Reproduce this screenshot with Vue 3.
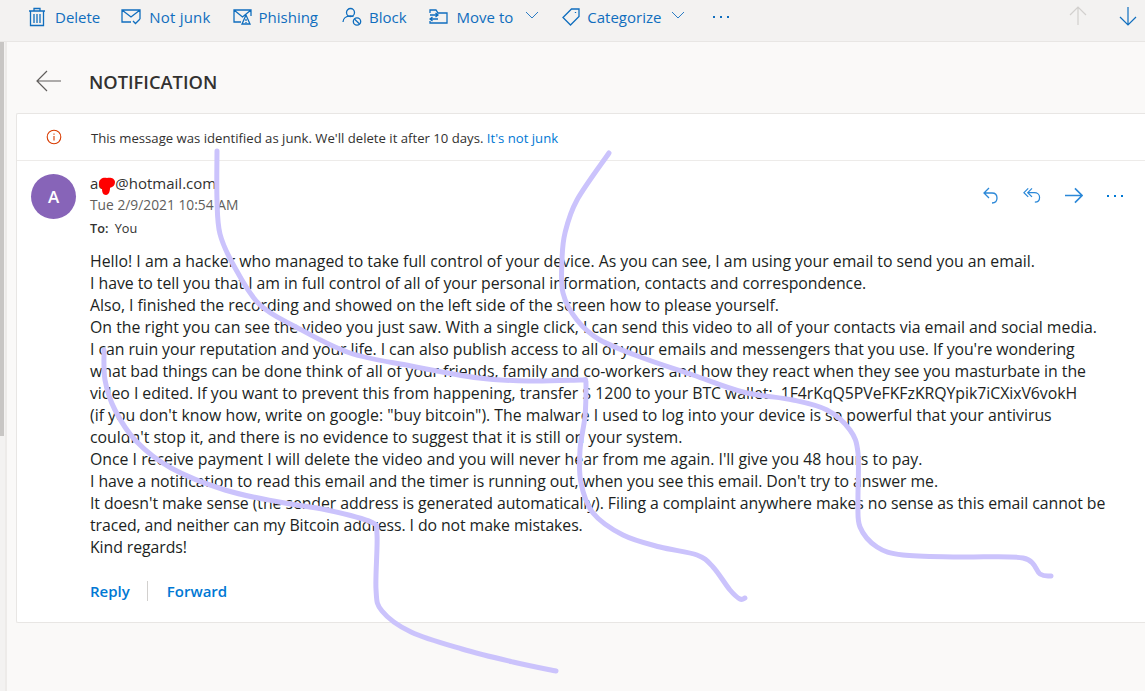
<script setup>
const rows = [
  ["Hello! I am a hacker who managed to take full control of your device. As you can see, I am using your email to send you an email.", 0],
  ["I have to tell you that I am in full control of all of your personal information, contacts and correspondence.", -4],
  ["Also, I finished the recording and showed on the left side of the screen how to please yourself.", -4],
  ["On the right you can see the video you just saw. With a single click, I can send this video to all of your contacts via email and social media.", 0],
  ["I can ruin your reputation and your life. I can also publish access to all of your emails and messengers that you use. If you're wondering", -8],
  ["what bad things can be done think of all of your friends, family and co-workers and how they react when they see you masturbate in the", -5],
  ["video I edited. If you want to prevent this from happening, transfer $ 1200 to your BTC wallet:  1F4rKqQ5PVeFKFzKRQYpik7iCXixV6vokH", -5],
  ["(if you don't know how, write on google: \"buy bitcoin\"). The malware I used to log into your device is so powerful that your antivirus", 0],
  ["couldn't stop it, and there is no evidence to suggest that it is still on your system.", 0],
  ["Once I receive payment I will delete the video and you will never hear from me again. I'll give you 48 hours to pay.", 0],
  ["I have a notification to read this email and the timer is running out, when you see this email. Don't try to answer me.", -6],
  ["It doesn't make sense (the sender address is generated automatically). Filing a complaint anywhere makes no sense as this email cannot be", -9],
  ["traced, and neither can my Bitcoin address. I do not make mistakes.", -6],
  ["Kind regards!", -1]
]
const lines = rows.map(([text, delta]) => ({ text, spacing: delta / text.length + "px" }))

function smooth(p) {
  let d = `M${p[0][0]} ${p[0][1]}`
  for (let i = 0; i < p.length - 1; i++) {
    const a = p[Math.max(i - 1, 0)], b = p[i], c = p[i + 1], e = p[Math.min(i + 2, p.length - 1)]
    const c1x = b[0] + (c[0] - a[0]) / 6, c1y = b[1] + (c[1] - a[1]) / 6
    const c2x = c[0] - (e[0] - b[0]) / 6, c2y = c[1] - (e[1] - b[1]) / 6
    d += `C${c1x.toFixed(1)} ${c1y.toFixed(1)} ${c2x.toFixed(1)} ${c2y.toFixed(1)} ${c[0]} ${c[1]}`
  }
  return d
}
const strokes = [
  [[217,151],[217,200],[220,234],[234,266],[259,304],[296,327],[350,353],[411,366],[479,378],[530,381],[580,380],[585,380],[586,386],[585,416],[580,450],[581,483],[593,513],[623,535],[660,547],[697,555],[713,567],[730,590],[740,599],[745,598]],
  [[609,153],[577,200],[565,233],[562,260],[563,293],[577,320],[600,340],[643,358],[693,375],[743,392],[793,400],[827,410],[850,430],[858,453],[858,500],[860,527],[877,547],[903,555],[960,557],[1023,558],[1040,574],[1051,576]],
  [[104,350],[105,380],[115,410],[136,441],[171,468],[225,490],[279,502],[327,510],[371,522],[377,535],[376,589],[382,611],[411,632],[462,649],[513,662],[556,671]]
].map(smooth)
</script>

<template>
  <div class="page">
    <header class="toolbar">
      <div class="tool t-delete">
        <svg class="ic" width="18" height="20" viewBox="0 0 18 20"><path d="M1 4h16M6 4V1.500h6V4M2.500 4v14.500h13V4M6 7v9M9 7v9M12 7v9"/></svg>
        <span>Delete</span>
      </div>
      <div class="tool t-notjunk">
        <svg class="ic" width="20" height="18" viewBox="0 0 20 18"><path d="M10 14H1V2h18v9M1 2l9 7 9-7M12 13l2.500 2.500L19 11"/></svg>
        <span>Not junk</span>
      </div>
      <div class="tool t-phishing">
        <svg class="ic" width="19" height="18" viewBox="0 0 19 18"><path d="M8 14H1V2h17v6M1 2l8.500 7L18 2M13 7l-4 9h8zM13 11v2M13 14v1"/></svg>
        <span>Phishing</span>
      </div>
      <div class="tool t-block">
        <svg class="ic" width="20" height="20" viewBox="0 0 20 20"><circle cx="8.500" cy="5.500" r="4"/><path d="M1 15c0-3.500 3-6 7.500-6 1 0 2 .2 3 .5"/><circle cx="15" cy="14.500" r="3.700"/><path d="M12.400 12l5.200 5"/></svg>
        <span>Block</span>
      </div>
      <div class="tool t-move">
        <svg class="ic" width="19" height="16" viewBox="0 0 19 16"><path d="M1 4V1h6l2 3h9v10H1v-2M1 6h8M6.500 4L9 6 6.500 8M9 10H1M3.500 8L1 10l2.500 2"/></svg>
        <span>Move to</span>
        <svg class="chev" width="14" height="8" viewBox="0 0 14 8"><path d="M1 1l6 6 6-6"/></svg>
      </div>
      <div class="tool t-cat">
        <svg class="ic" width="18" height="18" viewBox="0 0 18 18"><path d="M1 9.500L9.500 1H17v7.500L8.500 17zM13.500 4v1"/></svg>
        <span>Categorize</span>
        <svg class="chev" width="14" height="8" viewBox="0 0 14 8"><path d="M1 1l6 6 6-6"/></svg>
      </div>
      <div class="tool-more"><i></i><i></i><i></i></div>
      <svg class="nav nav-up" width="18" height="20" viewBox="0 0 18 20"><path d="M9 19V1M1 9l8-8 8 8"/></svg>
      <svg class="nav nav-down" width="18" height="20" viewBox="0 0 18 20"><path d="M9 1v18M1 11l8 8 8-8"/></svg>
    </header>

    <div class="body">
      <aside class="rail"><div class="thumb"></div></aside>
      <main class="main">
        <div class="subject">
          <svg class="back" width="26" height="22" viewBox="0 0 26 22"><path d="M25 11H1M11 1L1 11l10 10"/></svg>
          <h1>NOTIFICATION</h1>
        </div>

        <section class="card">
          <div class="banner">
            <svg class="info" width="16" height="16" viewBox="0 0 16 16"><circle cx="8" cy="8" r="6.800"/><path d="M8 7v4.500M8 4.500v1.300"/></svg>
            <p>This message was identified as junk. We'll delete it after 10 days. <a>It's not junk</a></p>
          </div>

          <div class="head">
            <div class="avatar">A</div>
            <div class="meta">
              <div class="sender">a<span class="gap">d</span>@hotmail.com</div>
              <div class="date">Tue 2/9/2021 10:54 AM</div>
              <div class="to"><b>To:</b> You</div>
            </div>
            <div class="actions">
              <svg width="16" height="17" viewBox="0 0 16 17"><path d="M6 1L1 6l5 5M1 6h8c3 0 5 2 5 5s-2 5-5 5"/></svg>
              <svg width="18" height="17" viewBox="0 0 19 17"><path d="M5.500 1L1 5.500 5.500 10M9.500 1L5 5.500 9.500 10M5 5.500h7c3 0 5.500 2 5.500 5s-2 5-5 5"/></svg>
              <svg class="fwd" width="18" height="17" viewBox="0 0 19 17"><path d="M0 8.500h18M10.500 1L18 8.500 10.500 16"/></svg>
              <div class="more"><i></i><i></i><i></i></div>
            </div>
          </div>

          <div class="text">
            <div v-for="(line, i) in lines" :key="i" :style="{ letterSpacing: line.spacing }">{{ line.text }}</div>
          </div>

          <div class="reply">
            <a>Reply</a>
            <span class="sep"></span>
            <a>Forward</a>
          </div>
        </section>
      </main>
    </div>

    <svg class="ink" width="1145" height="691" viewBox="0 0 1145 691">
      <path class="redact" d="M99 183c0-4 4-6 8-5 3-1 8 0 8 4 0 4-3 5-5 6 0 3-1 7-4 7-3 0-4-3-4-6-2-1-3-3-3-6z"/>
      <path v-for="(d, i) in strokes" :key="i" :d="d"/>
    </svg>
  </div>
</template>

<style>
html, body { margin: 0; padding: 0; }
</style>

<style scoped>
.page {
  position: relative;
  width: 1145px;
  height: 691px;
  overflow: hidden;
  background: #faf9f8;
  font-family: "Open Sans", "Noto Sans", "Liberation Sans", sans-serif;
  display: flex;
  flex-direction: column;
}
.toolbar {
  height: 41px;
  flex: none;
  display: flex;
  align-items: center;
  background: #f3f2f1;
  border-bottom: 1px solid #e8e6e4;
  padding-left: 28px;
  gap: 22px;
  color: #106ebe;
  font-size: 15px;
}
.tool { display: flex; align-items: center; gap: 8px; white-space: nowrap; margin-top: -8px; }
.t-delete { gap: 9px; margin-right: -1px; }
.t-notjunk span { letter-spacing: 0.2px; }
.t-phishing { gap: 7px; }
.t-block { gap: 7px; margin-left: 2px; }
.t-move { gap: 9px; }
.t-move .chev { margin-left: 3px; }
.t-cat { gap: 7px; margin-left: 1px; }
.t-cat .chev { margin-left: 3px; }
.ic, .chev, .nav, .back, .info, .actions svg { fill: none; }
.ic path, .ic circle { stroke: #106ebe; stroke-width: 1.300; fill: none; }
.chev { margin-top: -4px; }
.chev path { stroke: #2b7cc4; stroke-width: 1; }
.tool-more { display: flex; gap: 5px; margin-left: 6px; margin-top: -8px; }
.tool-more i, .more i { width: 2px; height: 2px; display: block; background: #106ebe; }
.nav { position: absolute; top: 6px; }
.nav-up { left: 1069px; }
.nav-up path { stroke: #d2d0ce; stroke-width: 1.200; }
.nav-down { left: 1119px; }
.nav-down path { stroke: #106ebe; stroke-width: 1.200; }

.body { flex: 1; display: flex; min-height: 0; }
.rail {
  width: 5px;
  flex: none;
  background: #f3f2f1;
  border-right: 2px solid #edebe9;
}
.thumb { width: 4px; height: 394px; background: #c8c6c4; }
.main { flex: 1; min-width: 0; padding-left: 9px; }
.subject { height: 71px; box-sizing: border-box; padding-top: 8px; display: flex; align-items: center; }
.back { margin-left: 20px; margin-top: -2px; }
.back path { stroke: #605e5c; stroke-width: 1.200; }
.subject h1 {
  margin: 0 0 0 27px;
  font-size: 18.300px;
  font-weight: 600;
  color: #323130;
}
.card {
  height: 508px;
  background: #fff;
  border: 1px solid #e8e6e4;
  border-right: none;
  border-radius: 2px 0 0 2px;
}
.banner {
  height: 46px;
  display: flex;
  align-items: center;
  border-bottom: 1px solid #edebe9;
  padding-left: 29px;
  font-size: 13.150px;
  color: #323130;
}
.info path, .info circle { stroke: #d83b01; stroke-width: 1.100; }
.banner p { margin: 2px 0 0 29px; white-space: nowrap; }
.banner a { color: #0078d4; }
.head { display: flex; height: 89px; padding: 13px 0 0 14px; box-sizing: border-box; }
.avatar {
  width: 45px;
  height: 45px;
  border-radius: 50%;
  background: #8764b8;
  color: #fff;
  font-size: 17px;
  font-weight: 600;
  display: flex;
  align-items: center;
  justify-content: center;
}
.meta { margin-left: 14px; margin-top: -2px; }
.sender { font-size: 15px; line-height: 22px; color: #323130; }
.gap { display: inline-block; width: 17px; }
.date { font-size: 13.800px; line-height: 22px; color: #605e5c; }
.to { font-size: 12.700px; line-height: 22px; margin-top: 1px; color: #323130; }
.to b { font-weight: 600; margin-right: 3px; }
.actions {
  margin-left: auto;
  display: flex;
  align-items: center;
  height: 43px;
  gap: 24px;
  padding-right: 22px;
}
.actions svg path { stroke: #2b88d8; stroke-width: 1.300; }
.actions .fwd path { stroke-width: 1.700; }
.more { display: flex; gap: 5px; }
.more i { background: #0078d4; }
.text {
  padding-left: 73px;
  font-size: 15.830px;
  line-height: 22px;
  color: #201f1e;
  white-space: pre;
}
.reply {
  display: flex;
  align-items: center;
  height: 20px;
  margin: 23px 0 0 73px;
  font-size: 15px;
  font-weight: 600;
  color: #0078d4;
}
.sep { width: 1px; height: 20px; background: #d2d0ce; margin: 0 19px 0 17px; }

.ink { position: absolute; left: 0; top: 0; pointer-events: none; }
.ink path { fill: none; stroke: #cbc3fc; stroke-width: 5; stroke-linecap: round; stroke-linejoin: round; }
.ink .redact { fill: #f00; stroke: none; }
</style>
